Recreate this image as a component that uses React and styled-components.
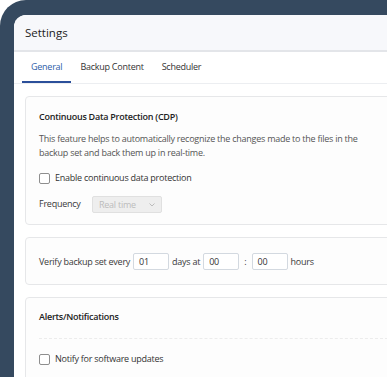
import React from 'react';
import styled, { createGlobalStyle } from 'styled-components';

const GlobalStyle = createGlobalStyle`
    html, body {
        margin: 0;
        padding: 0;
        background: #ffffff;
        overflow: hidden;
    }
    * {
        box-sizing: border-box;
    }
`

const Frame = styled.div`
    height: 377px;
    background: #35495f;
    border-top-left-radius: 26px;
    padding: 15px 0 0 14px;
    font-family: 'Open Sans', 'Noto Sans', sans-serif;
`
const Window = styled.div`
    height: 100%;
    background: #ffffff;
    border-top-left-radius: 12px;
    overflow: hidden;
    display: flex;
    flex-direction: column;
`
const Header = styled.div`
    height: 37px;
    flex-shrink: 0;
    display: flex;
    align-items: center;
    padding: 0 11px 0;
    background: #f7f8fb;
    border-bottom: 2px solid #e3e5e9;
    font-size: 11.5px;
    font-weight: 500;
    color: #222;
`
const Tabs = styled.div`
    height: 32px;
    flex-shrink: 0;
    display: flex;
    padding-left: 8px;
    border-bottom: 1px solid #eceef1;
`
const Tab = styled.div`
    display: flex;
    align-items: center;
    padding: 0 9px;
    font-size: 9px;
    letter-spacing: -0.25px;
    color: ${(p) => (p.active ? '#2f5ea8' : '#333')};
    border-bottom: 2px solid ${(p) => (p.active ? '#2b4f9a' : 'transparent')};
`
const Content = styled.div`
    display: flex;
    flex-direction: column;
    gap: 12px;
    padding: 12px 0 0 11px;
    letter-spacing: -0.25px;
`
const Card = styled.div`
    margin-right: -20px;
    background: #fdfdfd;
    border: 1px solid #e6e7e9;
    border-radius: 4px;
    padding: ${(p) => p.pad || '13px 13px 11px'};
`
const Title = styled.div`
    font-size: 9px;
    line-height: 14px;
    font-weight: 600;
    color: #222;
`
const Text = styled.p`
    margin: 8px 0 0;
    font-size: 9px;
    line-height: 14px;
    color: #555;
`
const CheckRow = styled.label`
    display: flex;
    align-items: center;
    gap: 5px;
    margin-top: ${(p) => p.mt || '11px'};
    font-size: 9px;
    line-height: 14px;
    color: #333;
`
const Box = styled.span`
    width: 11px;
    height: 11px;
    border: 1px solid #8e8e8e;
    border-radius: 2px;
    background: #fff;
`
const FieldRow = styled.div`
    display: flex;
    align-items: center;
    gap: ${(p) => p.gap || '4px'};
    margin-top: ${(p) => p.mt || '0'};
    font-size: 9px;
    color: #3a3a3a;
`
const Label = styled.span`
    width: 49px;
    margin-top: -2px;
`
const Select = styled.div`
    width: 70px;
    height: 17px;
    display: flex;
    align-items: center;
    justify-content: space-between;
    padding: 0 6px;
    background: #eeeeee;
    border: 1px solid #e0e0e0;
    border-radius: 2px;
    color: #bcbcbc;
    font-size: 9px;
`
const Input = styled.div`
    width: 36px;
    height: 17px;
    display: flex;
    align-items: center;
    padding: 0 5px;
    background: #fff;
    border: 1px solid #d3d9e0;
    border-radius: 2px;
    color: #333;
    font-size: 9px;
`
const Divider = styled.div`
    margin: 14px 0 0;
    border-top: 1px dashed #ececec;
`

const Chevron = () => (
    <svg width="6" height="4" viewBox="0 0 6 4">
        <path d="M0.5 0.5 L3 3 L5.5 0.5" fill="none" stroke="#b5b5b5" strokeWidth="0.9" />
    </svg>
)

const App = () => {
    return (
        <>
            <GlobalStyle />
            <Frame>
                <Window>
                    <Header>Settings</Header>
                    <Tabs>
                        <Tab active>General</Tab>
                        <Tab>Backup Content</Tab>
                        <Tab>Scheduler</Tab>
                    </Tabs>
                    <Content>
                        <Card>
                            <Title>Continuous Data Protection (CDP)</Title>
                            <Text>
                                This feature helps to automatically recognize the changes made to the files in the
                                <br />
                                backup set and back them up in real-time.
                            </Text>
                            <CheckRow>
                                <Box />
                                Enable continuous data protection
                            </CheckRow>
                            <FieldRow mt="11px" gap="4px">
                                <Label>Frequency</Label>
                                <Select>
                                    Real time
                                    <Chevron />
                                </Select>
                            </FieldRow>
                        </Card>
                        <Card pad="15px 13px 14px">
                            <FieldRow gap="3px">
                                <span>Verify backup set every</span>
                                <Input>01</Input>
                                <span>days at</span>
                                <Input>00</Input>
                                <span>&nbsp;:&nbsp;</span>
                                <Input>00</Input>
                                <span>hours</span>
                            </FieldRow>
                        </Card>
                        <Card pad="12px 13px 20px">
                            <Title>Alerts/Notifications</Title>
                            <Divider />
                            <CheckRow mt="13px">
                                <Box />
                                Notify for software updates
                            </CheckRow>
                        </Card>
                    </Content>
                </Window>
            </Frame>
        </>
    )
}

export default App;
